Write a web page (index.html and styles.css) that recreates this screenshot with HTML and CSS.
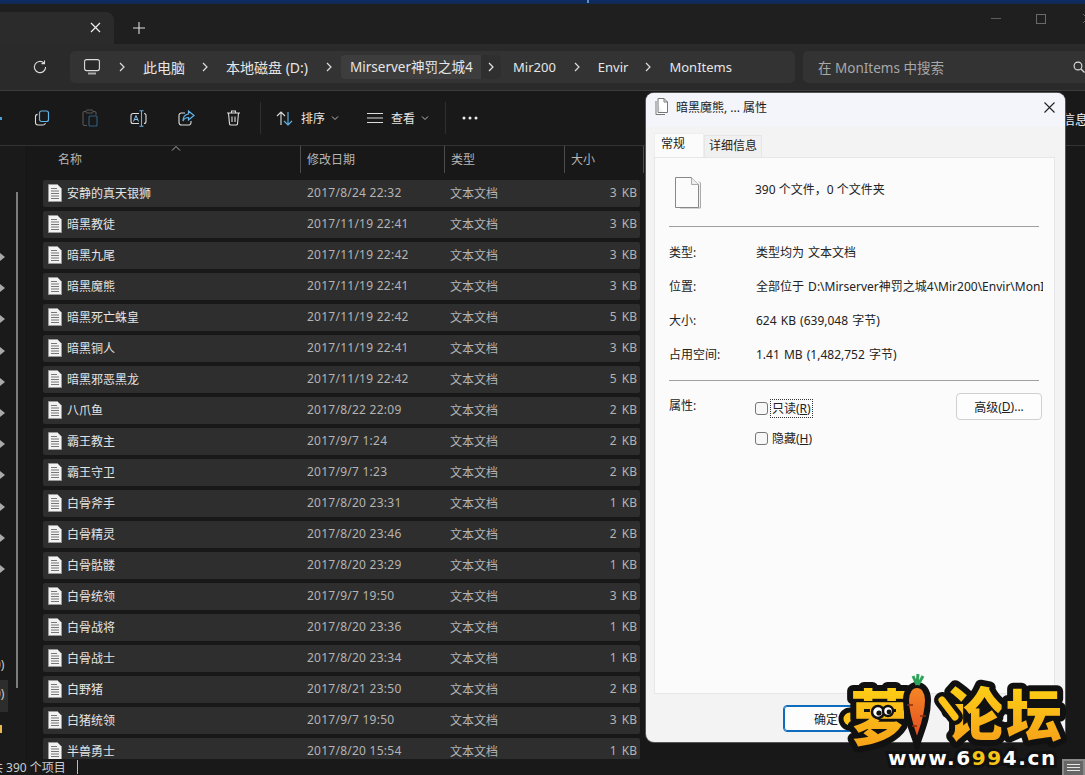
FILE: index.html
```html
<!DOCTYPE html>
<html lang="zh-CN">
<head>
<meta charset="utf-8">
<title>MonItems</title>
<link rel="stylesheet" href="styles.css">
</head>
<body>
<svg class="defs" width="0" height="0" aria-hidden="true">
  <symbol id="doc" viewBox="0 0 14 18">
    <path d="M.5.5h9l4 4v13H.5z" fill="#f2f2f2" stroke="#9a9a9a"/>
    <path d="M3 4.500h6M3 7h8M3 9.500h8M3 12h8M3 14.500h8" stroke="#777" stroke-width="1"/>
  </symbol>
  <symbol id="chev" viewBox="0 0 8 12">
    <path d="M2 2l4 4-4 4" fill="none" stroke="currentColor" stroke-width="1.200"/>
  </symbol>
  <symbol id="down" viewBox="0 0 8 6">
    <path d="M1 1.500l3 3 3-3" fill="none" stroke="#bbb" stroke-width="1"/>
  </symbol>
</svg>

<div class="app">
  <div class="topstrip"><span class="strip-mark"></span></div>

  <div class="titlebar">
    <div class="tab">
      <svg class="tab-x" width="11" height="11" viewBox="0 0 11 11"><path d="M1 1l9 9M10 1l-9 9" stroke="#eee" stroke-width="1.200"/></svg>
    </div>
    <svg class="tab-plus" width="12" height="12" viewBox="0 0 12 12"><path d="M6 0v12M0 6h12" stroke="#ddd" stroke-width="1.100"/></svg>
    <div class="winctl">
      <span class="win-min"></span>
      <span class="win-max"></span>
      <svg class="win-close" width="11" height="11" viewBox="0 0 11 11"><path d="M1 1l9 9M10 1l-9 9" stroke="#666" stroke-width="1"/></svg>
    </div>
  </div>

  <div class="addressbar">
    <svg class="refresh" width="14" height="14" viewBox="0 0 14 14"><path d="M12.600 7a5.600 5.600 0 1 1-1.700-4" fill="none" stroke="#ddd" stroke-width="1.100"/><path d="M11.500.6v3h-3" fill="none" stroke="#ddd" stroke-width="1.100"/></svg>
    <div class="crumbs">
      <svg class="pc" width="16" height="16" viewBox="0 0 16 16"><rect x=".6" y=".6" width="14.800" height="11" rx="2" fill="#2a2a2a" stroke="#ddd" stroke-width="1.100"/><path d="M4 14.500h8" stroke="#aaa" stroke-width="2"/></svg>
      <svg class="cv" width="8" height="12"><use href="#chev"/></svg>
      <span class="crumb c1">此电脑</span>
      <svg class="cv" width="8" height="12"><use href="#chev"/></svg>
      <span class="crumb c2">本地磁盘 (D:)</span>
      <svg class="cv" width="8" height="12"><use href="#chev"/></svg>
      <div class="crumb-hover">
        <span class="crumb c3">Mirserver神罚之城4</span>
        <span class="hover-chev"><svg width="8" height="12"><use href="#chev"/></svg></span>
      </div>
      <span class="crumb c4">Mir200</span>
      <svg class="cv" width="8" height="12"><use href="#chev"/></svg>
      <span class="crumb c5">Envir</span>
      <svg class="cv" width="8" height="12"><use href="#chev"/></svg>
      <span class="crumb c6">MonItems</span>
    </div>
    <div class="search">
      <span>在 MonItems 中搜索</span>
      <svg class="lens" width="12" height="12" viewBox="0 0 12 12"><circle cx="5" cy="5" r="3.900" fill="none" stroke="#ddd" stroke-width="1.100"/><path d="M8 8l3.500 3.500" stroke="#ddd" stroke-width="1.200"/></svg>
    </div>
  </div>

  <div class="toolbar">
    <span class="cut-mark"></span>
    <svg class="tool t-copy" width="16" height="16" viewBox="0 0 16 16"><rect x="5.500" y="1" width="9" height="10.500" rx="2" fill="none" stroke="#62b5ea" stroke-width="1.200"/><path d="M3.600 4.400A2.400 2.400 0 0 0 1.500 7v5.500A2.500 2.500 0 0 0 4 15h5a2.400 2.400 0 0 0 2.400-2" fill="none" stroke="#ddd" stroke-width="1.100"/></svg>
    <svg class="tool t-paste" width="16" height="18" viewBox="0 0 16 18"><path d="M4 2.500H2.500a1.500 1.500 0 0 0-1.500 1.500v11a1.500 1.500 0 0 0 1.500 1.500H5M11 2.500h1.500A1.500 1.500 0 0 1 14 4v2" fill="none" stroke="#585858" stroke-width="1.100"/><rect x="4" y="1" width="7" height="3" rx="1" fill="none" stroke="#585858"/><rect x="7" y="7" width="8" height="10" rx="1" fill="none" stroke="#2f5f80" stroke-width="1.100"/></svg>
    <svg class="tool t-rename" width="17" height="17" viewBox="0 0 17 17"><path d="M9 3.500H3a2 2 0 0 0-2 2v6a2 2 0 0 0 2 2h6M14 3.500a2 2 0 0 1 2 2v6a2 2 0 0 1-2 2" fill="none" stroke="#ddd" stroke-width="1.100"/><path d="M11.500 1v15M9.500.8h4M9.500 16.200h4" stroke="#62b5ea" stroke-width="1.100" fill="none"/><path d="M3.500 11.500l2.500-6 2.500 6M4.500 9.500h3" fill="none" stroke="#8ec7ee" stroke-width="1"/></svg>
    <svg class="tool t-share" width="17" height="16" viewBox="0 0 17 16"><path d="M7 3H3.500A2.500 2.500 0 0 0 1 5.500v7A2.500 2.500 0 0 0 3.500 15h7a2.500 2.500 0 0 0 2.500-2.500V11" fill="none" stroke="#ddd" stroke-width="1.100"/><path d="M10.500 1l5.500 4.500-5.500 4.500V7.500C8 7.500 6 8.500 5 11c0-4 2-6.500 5.500-7z" fill="none" stroke="#62b5ea" stroke-width="1.200"/></svg>
    <svg class="tool t-trash" width="15" height="16" viewBox="0 0 15 16"><path d="M1 3h13M5.500 3V1h4v2M2.500 3l1 11a1.500 1.500 0 0 0 1.500 1h5a1.500 1.500 0 0 0 1.500-1l1-11M6 6.500v5.500M9 6.500v5.500" fill="none" stroke="#ddd" stroke-width="1.100"/></svg>
    <span class="tsep s1"></span>
    <svg class="sort-ic" width="17" height="15" viewBox="0 0 17 15"><path d="M5 14V1M1 5l4-4 4 4" fill="none" stroke="#ddd" stroke-width="1.100"/><path d="M12 1v13M8 10l4 4 4-4" fill="none" stroke="#62b5ea" stroke-width="1.100"/></svg>
    <span class="tlabel l-sort">排序</span>
    <svg class="dn d1" width="8" height="6"><use href="#down"/></svg>
    <svg class="view-ic" width="16" height="10" viewBox="0 0 16 10"><path d="M0 .5h16M0 5h16M0 9.500h16" stroke="#ddd"/></svg>
    <span class="tlabel l-view">查看</span>
    <svg class="dn d2" width="8" height="6"><use href="#down"/></svg>
    <span class="tsep s2"></span>
    <svg class="more" width="16" height="4" viewBox="0 0 16 4"><circle cx="2" cy="2" r="1.500" fill="#eee"/><circle cx="8" cy="2" r="1.500" fill="#eee"/><circle cx="14" cy="2" r="1.500" fill="#eee"/></svg>
    <span class="details-cut">信息</span>
  </div>

  <div class="main">
    <aside class="side">
      <span class="side-scroll"></span>
      <div class="side-arrows">
        <i></i><i></i><i></i><i></i><i></i><i></i><i></i><i></i><i></i><i></i><i></i>
      </div>
      <span class="side-frag">0)</span>
      <span class="side-sel">0)</span>
      <span class="side-dot"></span>
    </aside>
    <section class="files">
      <div class="thead">
        <span class="th th-name">名称</span>
        <svg class="caret" width="10" height="5" viewBox="0 0 10 5"><path d="M1 4.500l4-4 4 4" fill="none" stroke="#aaa"/></svg>
        <span class="th th-date">修改日期</span>
        <span class="th th-type">类型</span>
        <span class="th th-size">大小</span>
      </div>
      <div class="rows">
        <div class="row"><svg class="doc"><use href="#doc"/></svg><span class="n">安静的真天银狮</span><span class="d">2017/8/24 22:32</span><span class="t">文本文档</span><span class="s">3 KB</span></div>
        <div class="row"><svg class="doc"><use href="#doc"/></svg><span class="n">暗黑教徒</span><span class="d">2017/11/19 22:41</span><span class="t">文本文档</span><span class="s">3 KB</span></div>
        <div class="row"><svg class="doc"><use href="#doc"/></svg><span class="n">暗黑九尾</span><span class="d">2017/11/19 22:42</span><span class="t">文本文档</span><span class="s">3 KB</span></div>
        <div class="row"><svg class="doc"><use href="#doc"/></svg><span class="n">暗黑魔熊</span><span class="d">2017/11/19 22:41</span><span class="t">文本文档</span><span class="s">3 KB</span></div>
        <div class="row"><svg class="doc"><use href="#doc"/></svg><span class="n">暗黑死亡蛛皇</span><span class="d">2017/11/19 22:42</span><span class="t">文本文档</span><span class="s">5 KB</span></div>
        <div class="row"><svg class="doc"><use href="#doc"/></svg><span class="n">暗黑铜人</span><span class="d">2017/11/19 22:41</span><span class="t">文本文档</span><span class="s">3 KB</span></div>
        <div class="row"><svg class="doc"><use href="#doc"/></svg><span class="n">暗黑邪恶黑龙</span><span class="d">2017/11/19 22:42</span><span class="t">文本文档</span><span class="s">5 KB</span></div>
        <div class="row"><svg class="doc"><use href="#doc"/></svg><span class="n">八爪鱼</span><span class="d">2017/8/22 22:09</span><span class="t">文本文档</span><span class="s">2 KB</span></div>
        <div class="row"><svg class="doc"><use href="#doc"/></svg><span class="n">霸王教主</span><span class="d">2017/9/7 1:24</span><span class="t">文本文档</span><span class="s">2 KB</span></div>
        <div class="row"><svg class="doc"><use href="#doc"/></svg><span class="n">霸王守卫</span><span class="d">2017/9/7 1:23</span><span class="t">文本文档</span><span class="s">2 KB</span></div>
        <div class="row"><svg class="doc"><use href="#doc"/></svg><span class="n">白骨斧手</span><span class="d">2017/8/20 23:31</span><span class="t">文本文档</span><span class="s">1 KB</span></div>
        <div class="row"><svg class="doc"><use href="#doc"/></svg><span class="n">白骨精灵</span><span class="d">2017/8/20 23:46</span><span class="t">文本文档</span><span class="s">2 KB</span></div>
        <div class="row"><svg class="doc"><use href="#doc"/></svg><span class="n">白骨骷髅</span><span class="d">2017/8/20 23:29</span><span class="t">文本文档</span><span class="s">1 KB</span></div>
        <div class="row"><svg class="doc"><use href="#doc"/></svg><span class="n">白骨统领</span><span class="d">2017/9/7 19:50</span><span class="t">文本文档</span><span class="s">3 KB</span></div>
        <div class="row"><svg class="doc"><use href="#doc"/></svg><span class="n">白骨战将</span><span class="d">2017/8/20 23:36</span><span class="t">文本文档</span><span class="s">1 KB</span></div>
        <div class="row"><svg class="doc"><use href="#doc"/></svg><span class="n">白骨战士</span><span class="d">2017/8/20 23:34</span><span class="t">文本文档</span><span class="s">1 KB</span></div>
        <div class="row"><svg class="doc"><use href="#doc"/></svg><span class="n">白野猪</span><span class="d">2017/8/21 23:50</span><span class="t">文本文档</span><span class="s">2 KB</span></div>
        <div class="row"><svg class="doc"><use href="#doc"/></svg><span class="n">白猪统领</span><span class="d">2017/9/7 19:50</span><span class="t">文本文档</span><span class="s">3 KB</span></div>
        <div class="row"><svg class="doc"><use href="#doc"/></svg><span class="n">半兽勇士</span><span class="d">2017/8/20 15:54</span><span class="t">文本文档</span><span class="s">1 KB</span></div>
      </div>
    </section>
  </div>

  <div class="status">
    <span class="count">共 390 个项目</span>
    <span class="status-sep"></span>
    <span class="view-toggle"><i></i><i></i><i></i></span>
  </div>

  <div class="dialog">
    <div class="dlg-title">
      <svg width="13" height="18" viewBox="0 0 13 18"><path d="M1 3v13.500h9M3 .5h6l3.500 3.500v10.500H3zM9 .5V4h3.500" fill="#fff" stroke="#777"/></svg>
      <span class="dlg-name">暗黑魔熊, ... 属性</span>
      <svg class="dlg-x" width="11" height="11" viewBox="0 0 11 11"><path d="M.5.5l10 10M10.500.5l-10 10" stroke="#222" stroke-width="1.100"/></svg>
    </div>
    <div class="dlg-tabs">
      <span class="dtab active">常规</span>
      <span class="dtab">详细信息</span>
    </div>
    <div class="panel">
      <div class="summary">
        <svg class="multi" width="26" height="34" viewBox="0 0 26 34"><path d="M24 6.500l1.500 1.500v25H5" fill="#f1f1f1" stroke="#aaa"/><path d="M.5 2.500h16l7 7v23H.5z" fill="#fbfbfb" stroke="#888"/><path d="M16.500 2.500v7h7" fill="#eee" stroke="#aaa"/></svg>
        <span class="summary-text">390 个文件，0 个文件夹</span>
      </div>
      <hr class="rule">
      <dl class="props">
        <dt>类型:</dt><dd>类型均为 文本文档</dd>
        <dt>位置:</dt><dd>全部位于 D:\Mirserver神罚之城4\Mir200\Envir\MonItems</dd>
        <dt>大小:</dt><dd>624 KB (639,048 字节)</dd>
        <dt>占用空间:</dt><dd>1.41 MB (1,482,752 字节)</dd>
      </dl>
      <hr class="rule r2">
      <div class="attrs">
        <span class="attr-label">属性:</span>
        <div class="checks">
          <label class="chk"><span class="box"></span><span class="focus">只读(<u>R</u>)</span></label>
          <label class="chk"><span class="box"></span><span class="plain">隐藏(<u>H</u>)</span></label>
        </div>
        <span class="btn adv">高级(<u>D</u>)...</span>
      </div>
    </div>
    <div class="dlg-foot">
      <span class="btn ok">确定</span>
    </div>
  </div>

  <svg class="logo" width="240" height="105" viewBox="0 0 240 105">
    <defs>
      <linearGradient id="gold" x1="0" y1="0" x2="0" y2="1">
        <stop offset="0" stop-color="#ffdc14"/>
        <stop offset="1" stop-color="#f59a1a"/>
      </linearGradient>
      <linearGradient id="carrot" x1="0" y1="0" x2="0" y2="1">
        <stop offset="0" stop-color="#f58a26"/>
        <stop offset="1" stop-color="#e2451f"/>
      </linearGradient>
    </defs>
    <ellipse cx="12" cy="49" rx="9" ry="9" fill="#ffc416" stroke="#111" stroke-width="5"/>
    <g class="logo-cjk" fill="url(#gold)" stroke="#111" stroke-width="12" stroke-linejoin="round">
      <text x="12" y="70" font-size="60">萝</text>
      <text x="108" y="66" font-size="58">论</text>
      <text x="168" y="66" font-size="56">坛</text>
    </g>
    <path d="M79 15c-7 0-11 7-11 15 0 18 7 32 11 45 4-13 11-27 11-45 0-8-4-15-11-15z" fill="url(#carrot)" stroke="#111" stroke-width="6"/>
    <path d="M79 15l-4-9M79 15l1-11M80 15l5-9" stroke="#2fa35a" stroke-width="3" fill="none"/>
    <path d="M69 35h6M82 46h6M74 56h5" stroke="#8a2a10" stroke-width="1.500"/>
    <path d="M104 30l13 17" stroke="#111" stroke-width="16" stroke-linecap="round"/>
    <path d="M104 30l13 17" stroke="#ffc416" stroke-width="7" stroke-linecap="round"/>
    <circle cx="40" cy="42" r="6" fill="#fff" stroke="#111" stroke-width="2.500"/>
    <circle cx="50" cy="41" r="5" fill="#fff" stroke="#111" stroke-width="2.500"/>
    <circle cx="41" cy="43" r="2.600" fill="#111"/>
    <circle cx="51" cy="42" r="2.400" fill="#111"/>
    <text class="lg-url" x="50" y="95" font-size="20" stroke="#111" stroke-width="6">www.6<tspan class="y">99</tspan>4.cn</text>
  </svg>
</div>
</body>
</html>
```

FILE: styles.css
```css
* { box-sizing: border-box; }
html, body { margin: 0; padding: 0; height: 100%; background: #191919; overflow: hidden; }
body { font-family: "Noto Sans", "Noto Sans CJK SC", sans-serif; font-size: 12px; color: #ddd; }
.defs { position: absolute; }

.app { position: relative; width: 1085px; height: 775px; overflow: hidden; display: flex; flex-direction: column; background: #191919; }

.topstrip { height: 4px; background: #0e2a5e; border-bottom: 1px solid #12294f; flex: none; padding-left: 587px; }
.strip-mark { display: block; width: 2px; height: 3px; background: #5d8fc0; }

.titlebar { height: 40px; flex: none; background: #1f1f1f; display: flex; align-items: flex-end; position: relative; }
.tab { width: 114px; height: 32px; background: #2b2b2b; border-top-right-radius: 8px; display: flex; align-items: center; justify-content: flex-end; padding-right: 13px; padding-bottom: 2px; }
.tab-plus { margin: 0 0 10px 19px; }
.winctl { margin-left: auto; align-self: flex-start; display: flex; align-items: center; height: 29px; }
.win-min { width: 10px; height: 1px; background: #5d5d5d; margin-right: 35px; }
.win-max { width: 10px; height: 10px; border: 1px solid #6a6a6a; margin-right: 36px; }
.win-close { margin-right: -8px; }

.addressbar { height: 47px; flex: none; background: #2a2a2a; border-bottom: 1px solid #3c3c3c; display: flex; align-items: center; padding-left: 33px; }
.refresh { flex: none; margin-right: 23px; }
.crumbs { width: 725px; height: 32px; background: #333; border-radius: 5px; display: flex; align-items: center; font-size: 13px; color: #e6e6e6; padding-left: 14px; flex: none; }
.pc { flex: none; margin-right: 18px; }
.cv { flex: none; color: #ddd; }
.crumb { flex: none; white-space: nowrap; }
.c1 { margin: 0 16px 0 17px; font-size: 14px; }
.c2 { margin: 0 17px; font-size: 14px; }
.crumb-hover { display: flex; align-items: stretch; height: 24px; margin: 0 12px 0 8px; background: #3d3d3d; border-radius: 4px; flex: none; }
.c3 { padding: 0 9px; line-height: 24px; width: 140px; font-size: 13.5px; }
.hover-chev { width: 20px; background: #2f2f2f; border-radius: 0 4px 4px 0; display: flex; align-items: center; justify-content: center; }
.c4 { margin-right: 17px; }
.c5 { margin: 0 16px 0 17px; }
.c6 { margin-left: 17px; }
.search { flex: none; width: 282px; height: 32px; margin-left: 8px; background: #333; border-radius: 5px 0 0 5px; display: flex; align-items: center; padding-left: 15px; font-size: 13.5px; color: #a8a8a8; }
.lens { margin-left: auto; }

.toolbar { height: 55px; flex: none; background: #191919; border-bottom: 1px solid #333; display: flex; align-items: center; position: relative; padding-left: 34px; }
.cut-mark { position: absolute; left: 0; top: 26px; width: 2px; height: 3px; background: #4a9fd8; }
.tool { flex: none; }
.t-copy { margin-right: 32px; }
.t-paste { margin-right: 32px; }
.t-rename { margin-right: 31px; }
.t-share { margin-right: 31px; }
.t-trash { margin-right: 19px; }
.tsep { width: 1px; height: 32px; background: #2f2f2f; flex: none; }
.sort-ic { margin-left: 15px; margin-right: 8px; flex: none; }
.tlabel { font-size: 12px; color: #e6e6e6; flex: none; }
.dn { flex: none; }
.d1 { margin: 0 28px 0 6px; }
.view-ic { margin-right: 8px; flex: none; }
.d2 { margin: 0 16px 0 6px; }
.more { margin-left: 16px; flex: none; }
.details-cut { margin-left: auto; font-size: 13px; color: #eee; margin-right: -3px; }

.main { flex: 1; min-height: 0; display: flex; }
.side { width: 27px; flex: none; position: relative; background: #1a1a1a; border-right: 1px solid #141414; overflow: hidden; }
.side-scroll { position: absolute; left: 16px; top: 46px; width: 2px; height: 496px; background: #7d7d7d; }
.side-arrows { position: absolute; left: 0; top: 107px; display: flex; flex-direction: column; gap: 23.200px; }
.side-arrows i { display: block; width: 0; height: 0; border-left: 5px solid #a9a9a9; border-top: 4px solid transparent; border-bottom: 4px solid transparent; }
.side-frag { position: absolute; left: -6px; top: 510px; color: #ccc; }
.side-sel { position: absolute; left: 0; top: 534px; width: 8px; height: 32px; background: #2d2d2d; color: #ccc; line-height: 28px; text-indent: -6px; overflow: hidden; }
.side-dot { position: absolute; left: 0; top: 579px; width: 2px; height: 8px; background: #e9b949; }

.files { flex: 1; min-width: 0; padding-left: 16px; background: #181818; display: flex; flex-direction: column; overflow: hidden; }
.thead { height: 34px; flex: none; position: relative; display: flex; align-items: flex-start; margin-left: -16px; color: #b5b5b5; font-size: 12px; }
.th { height: 27px; line-height: 27px; flex: none; padding-left: 6px; border-right: 1px solid #4c4c4c; }
.th-name { width: 274px; padding-left: 31px; }
.th-date { width: 144px; }
.th-type { width: 120px; }
.th-size { width: 79px; }
.caret { position: absolute; left: 144px; top: 0; }
.rows { flex: 1; min-height: 0; display: flex; flex-direction: column; gap: 4px; overflow: hidden; }
.row { flex: none; width: 597px; height: 27px; background: #2e2e2e; border-radius: 2px; display: grid; grid-template-columns: 19px 240px 143px 1fr 60px; align-items: center; padding: 0 3px 2px 5px; }
.doc { width: 14px; height: 18px; }
.n { color: #e4e4e4; font-size: 12px; white-space: nowrap; }
.d, .t, .s { color: #b4b4b4; font-size: 12px; white-space: nowrap; }
.d { letter-spacing: .25px; }
.s { text-align: right; word-spacing: 2px; }

.status { height: 16px; flex: none; background: #191919; display: flex; align-items: center; position: relative; font-size: 12px; color: #ccc; }
.count { margin-left: -9px; white-space: nowrap; }
.status-sep { width: 1px; height: 14px; background: #bbb; margin-left: 11px; }
.view-toggle { margin-left: auto; width: 23px; height: 16px; background: #666; border: 2px solid #8a8a8a; border-bottom: 0; padding: 3px 3px 0; display: flex; flex-direction: column; gap: 2px; }
.view-toggle i { display: block; height: 1px; background: #e6e6e6; }

.dialog { position: absolute; left: 646px; top: 93px; width: 419px; height: 649px; background: #f3f3f3; border-radius: 8px; box-shadow: 0 0 0 1px #555; display: flex; flex-direction: column; padding: 0 10px 0 8px; color: #222; font-size: 12px; overflow: hidden; }
.dlg-title { height: 34px; flex: none; margin: 0 -10px 0 -8px; padding: 0 10px 6px 9px; background: #f3f5fb; display: flex; align-items: center; gap: 8px; color: #1a1a1a; }
.dlg-x { margin-left: auto; }
.dlg-tabs { height: 30px; flex: none; display: flex; align-items: flex-end; }
.dtab { height: 22px; line-height: 20px; padding: 0 4px; background: #f0f0f0; border: 1px solid #e6e6e6; border-bottom: 0; color: #222; }
.dtab.active { height: 24px; width: 50px; padding: 0 6px; background: #fbfbfb; line-height: 20px; border-color: #eee; }
.panel { height: 537px; flex: none; background: #fbfbfb; border: 1px solid #e6e6e6; padding: 17px 15px 0 14px; }
.summary { height: 33px; display: flex; align-items: center; color: #222; }
.summary-text { margin-bottom: 6px; }
.multi { margin-left: 6px; margin-right: 54px; flex: none; }
.rule { height: 1px; border: 0; background: #a0a0a0; margin: 18px 0 0; width: 370px; }
.props { margin: 8px 0 0; display: grid; grid-template-columns: 87px 1fr; grid-auto-rows: 34px; align-items: center; }
.props dt { margin: 0; color: #222; }
.props dd { margin: 0; color: #222; white-space: nowrap; overflow: hidden; width: 287px; word-spacing: 1px; }
.rule.r2 { margin-top: 9px; }
.attrs { margin-top: 12px; display: flex; align-items: flex-start; }
.attr-label { width: 86px; flex: none; padding-top: 3px; }
.checks { display: flex; flex-direction: column; gap: 12px; padding-top: 6px; width: 201px; flex: none; }
.chk { display: flex; align-items: center; height: 18px; gap: 3px; }
.box { width: 13px; height: 13px; border: 1px solid #777; border-radius: 3px; background: #f7f7f7; flex: none; }
.focus { outline: 1px dotted #333; line-height: 17px; padding: 0 1px; }
.plain { padding: 0 1px; }
.btn { display: flex; align-items: center; justify-content: center; width: 86px; height: 27px; background: #fdfdfd; border: 1px solid #d0d0d0; border-radius: 4px; color: #222; flex: none; }
.dlg-foot { flex: 1; display: flex; padding: 11px 0 0 129px; }
.ok { border: 1px solid #0f6cbd; outline: 1px solid #0f6cbd; outline-offset: -2px; }

.logo { position: absolute; left: 838px; top: 670px; overflow: visible; }
.logo text { paint-order: stroke; }
.logo-cjk { font-family: "Noto Sans CJK SC", sans-serif; font-weight: 900; }
.lg-url { font-family: "DejaVu Sans", sans-serif; font-weight: 700; fill: #fff; letter-spacing: 1.600px; }
.lg-url .y { fill: #f5c518; }
```
